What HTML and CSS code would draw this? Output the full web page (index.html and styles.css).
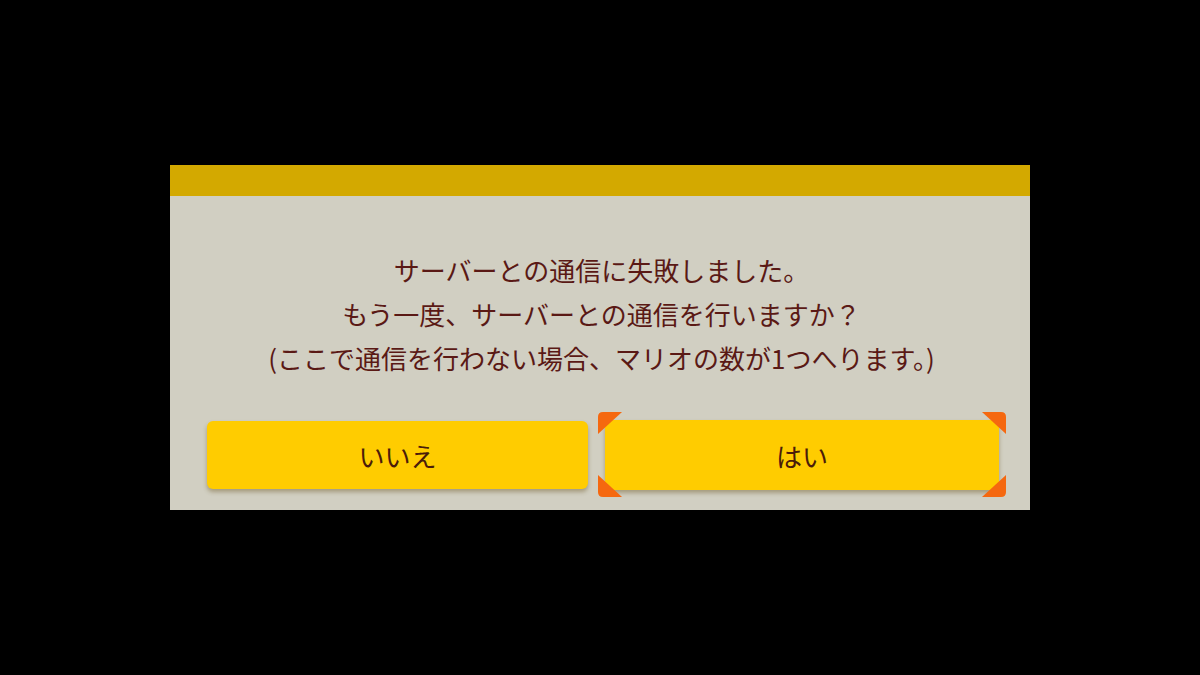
FILE: index.html
```html
<!DOCTYPE html>
<html lang="ja">
<head>
<meta charset="utf-8">
<link rel="stylesheet" href="styles.css">
</head>
<body>
<div class="screen">
  <div class="dialog">
    <div class="dialog-header"></div>
    <div class="dialog-body">
      <div class="message">
        <p>サーバーとの通信に失敗しました。</p>
        <p>もう一度、サーバーとの通信を行いますか？</p>
        <p>(ここで通信を行わない場合、マリオの数が1つへります。)</p>
      </div>
      <div class="buttons">
        <div class="btn btn-no">いいえ</div>
        <div class="btn btn-yes">はい
          <svg class="mark mark-tl" viewBox="0 0 24 22"><path d="M0 5 Q0 0 5 0 L24 0 L0 22 Z"/></svg>
          <svg class="mark mark-tr" viewBox="0 0 24 22"><path d="M24 5 Q24 0 19 0 L0 0 L24 22 Z"/></svg>
          <svg class="mark mark-bl" viewBox="0 0 24 22"><path d="M0 17 Q0 22 5 22 L24 22 L0 0 Z"/></svg>
          <svg class="mark mark-br" viewBox="0 0 24 22"><path d="M24 17 Q24 22 19 22 L0 22 L24 0 Z"/></svg>
        </div>
      </div>
    </div>
  </div>
</div>
</body>
</html>
```

FILE: styles.css
```css
html, body {
  margin: 0;
  padding: 0;
  background: #000;
}
.screen {
  width: 1200px;
  height: 675px;
  display: flex;
  align-items: center;
  justify-content: center;
  font-family: "Noto Sans CJK JP", "Noto Sans", sans-serif;
}
.dialog {
  width: 860px;
  background: #d1cfc2;
}
.dialog-header {
  height: 31px;
  background: #d3a900;
}
.dialog-body {
  padding: 52px 31px 20px 37px;
}
.message {
  text-align: center;
  color: #5a1915;
  font-size: 26px;
  line-height: 44px;
  margin-left: -3px;
}
.message p {
  margin: 0;
}
.buttons {
  margin-top: 40px;
  display: flex;
  align-items: center;
  gap: 17px;
}
.btn {
  position: relative;
  background: #ffcc00;
  border-radius: 6px;
  color: #4b1c0a;
  font-size: 26px;
  display: flex;
  align-items: center;
  justify-content: center;
  box-shadow: 0 3px 4px rgba(110, 90, 40, 0.45);
}
.btn-no {
  width: 381px;
  height: 68px;
}
.btn-yes {
  width: 394px;
  height: 70px;
}
.mark {
  position: absolute;
  width: 24px;
  height: 22px;
  fill: #f5680f;
}
.mark-tl { top: -8px; left: -7px; }
.mark-tr { top: -8px; right: -7px; }
.mark-bl { bottom: -7px; left: -7px; }
.mark-br { bottom: -7px; right: -7px; }
```
